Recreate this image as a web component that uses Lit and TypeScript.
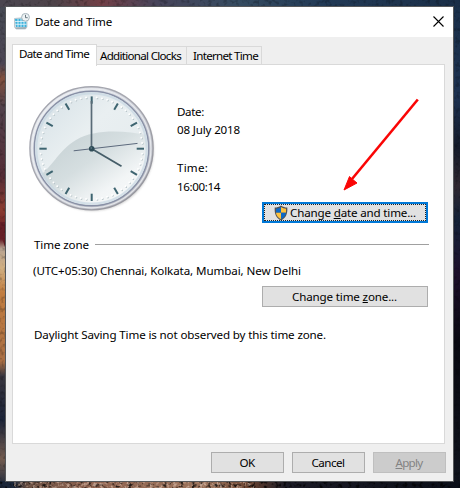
import { LitElement, html, css, svg } from "lit";
import { customElement, property } from "lit/decorators.js";

/** A label that tracks its letters so that the text fills a given width. */
@customElement("fit-label")
class FitLabel extends LitElement {
  @property({ type: Number }) width = 0;
  static styles = css`
    :host { display: inline-block; white-space: pre; }
    span { display: inline-block; }
  `;
  render() {
    return html`<span><slot></slot></span>`;
  }
  firstUpdated() {
    const span = this.renderRoot.querySelector("span")!;
    const n = (this.textContent ?? "").length;
    const natural = span.getBoundingClientRect().width;
    if (this.width && n) this.style.letterSpacing = `${(this.width - natural) / n}px`;
  }
}

@customElement("analog-clock")
class AnalogClock extends LitElement {
  static styles = css`
    :host { display: block; width: 130px; height: 130px; }
    svg { display: block; }
  `;
  render() {
    const c = 64.7;
    const at = (r: number, deg: number) => {
      const a = (deg * Math.PI) / 180;
      return [c + r * Math.sin(a), c - r * Math.cos(a)];
    };
    const marks = Array.from({ length: 60 }, (_, i) => {
      if (i % 5 === 0) {
        const [x1, y1] = at(45, i * 6);
        const [x2, y2] = at(52.3, i * 6);
        return svg`<line x1=${x1} y1=${y1} x2=${x2} y2=${y2} stroke="#3d6470" stroke-width="2"/>`;
      }
      const [x, y] = at(51, i * 6);
      return svg`<circle cx=${x + 0.4} cy=${y + 0.4} r="0.9" fill="#b3c1c6"/><circle cx=${x - 0.3} cy=${y - 0.4} r="1" fill="#fff"/>`;
    });
    return html`<svg width="130" height="130" viewBox="0 0 130 130">
      <defs>
        <linearGradient id="rim" x1="0" y1="0" x2="1" y2="1">
          <stop offset="0" stop-color="#a2a4ae"/><stop offset=".45" stop-color="#a7a8b0"/><stop offset="1" stop-color="#909098"/>
        </linearGradient>
        <linearGradient id="bevel" x1="0" y1="0" x2="1" y2="1">
          <stop offset="0" stop-color="#eef1f5"/><stop offset=".5" stop-color="#cfd2da"/><stop offset="1" stop-color="#b4b6be"/>
        </linearGradient>
        <linearGradient id="face" x1="0" y1="0" x2="1" y2="1">
          <stop offset="0" stop-color="#d3dfe5"/><stop offset=".4" stop-color="#e9eff1"/><stop offset="1" stop-color="#e3eaed"/>
        </linearGradient>
        <linearGradient id="sheen" x1="0" y1="0.3" x2="0.75" y2="1">
          <stop offset="0" stop-color="#c7d2d5"/><stop offset=".4" stop-color="#d5dee0"/><stop offset=".75" stop-color="#f2f5f6"/><stop offset="1" stop-color="#f8fafa"/>
        </linearGradient>
        <filter id="soft" x="-10%" y="-10%" width="120%" height="120%"><feGaussianBlur stdDeviation="1.2"/></filter>
        <clipPath id="dial"><circle cx="64.5" cy="64.5" r="56"/></clipPath>
      </defs>
      <circle cx="65.7" cy="66" r="61" fill="#777" opacity=".35" filter="url(#soft)"/>
      <circle cx="64.5" cy="64.3" r="61.6" fill="url(#bevel)" stroke="url(#rim)" stroke-width="1.4"/>
      <circle cx="64.5" cy="64.4" r="59.4" fill="none" stroke="#f2f3f6" stroke-width="1.2" opacity=".75"/>
      <circle cx="64.5" cy="64.5" r="57.2" fill="url(#face)" stroke="#8890a6" stroke-width="1.4"/>
      <path clip-path="url(#dial)" fill="url(#sheen)" d="M6 96C26 85 29 68 49 56C68 45 97 46 124 52V124H6Z"/>
      <circle cx="64.5" cy="64.5" r="55.2" fill="none" stroke="#c7d7e2" stroke-width="2.2" opacity=".7"/>
      ${marks}
      <line x1="46.7" y1="66.8" x2="110.5" y2="59.4" stroke="#5d6a7d" stroke-width="1"/>
      <line x1=${c} y1=${c} x2="94.5" y2="82.3" stroke="#455d68" stroke-width="1.8"/>
      <line x1="64.5" y1=${c} x2="64.5" y2="17" stroke="#596b77" stroke-width="1.7"/>
      <circle cx=${c} cy=${c} r="2.8" fill="#2f4c57"/>
      <circle cx="64.2" cy="64" r=".7" fill="#73919b"/>
    </svg>`;
  }
}

@customElement("app-root")
class AppRoot extends LitElement {
  static styles = css`
    :host {
      display: block; position: relative; width: 460px; height: 488px; overflow: hidden;
      font: 11.6px/16px "Noto Sans", "Open Sans", sans-serif; color: #000;
    }
    * { box-sizing: border-box; }
    svg { display: block; }
    u { text-underline-offset: 1px; text-decoration-thickness: 1px; }
    .wallpaper {
      position: absolute; inset: 0;
      background:
        linear-gradient(90deg, #4b4650, #4e4349 12%, #713f46 22%, #47445a 34%, #354b60 52%, #223a56 70%, #1a2e47) 0 0 / 460px 7px no-repeat,
        linear-gradient(90deg, #1b2639 3%, #6b5043 6%, #8f6350 20%, #9c745c 45%, #6b4431 54%, #1b1a25 62%, #0b0f19) 0 481px / 460px 7px no-repeat,
        linear-gradient(#464a54, #4b4553 13%, #80503e 16%, #51414b 22%, #542c36 36%, #8a3b30 43%, #651e26 47.5%, #651e26 49%, #b8a391 51%, #d0ae80 55%, #c17d40 60%, #a96e43 74%, #38353e 77%, #1b2338 86%, #735c50 94%, #1b273b) 0 0 / 6px 488px no-repeat,
        linear-gradient(#1a3049, #1d3150 20%, #141a29 30%, #2f2830 38%, #142238 45%, #1d0f2a 56%, #090911 70%, #10141d) 452px 0 / 8px 488px no-repeat;
    }
    .stage { position: relative; padding: 6px 6px 6px 5px; height: 488px; }
    .window {
      width: 449px; height: 476px; border: 1px solid #56585a; background: #efefef;
      display: flex; flex-direction: column;
    }
    .titlebar { height: 30px; flex: none; background: #fff; display: flex; align-items: center; padding: 0 9px 1px 8px; }
    .titlebar fit-label { margin: 1px 0 0 5px; }
    .close { margin-left: auto; }
    .tabs { display: flex; align-items: flex-end; height: 28px; flex: none; padding-left: 6px; }
    .tab { height: 19px; border: 1px solid #d9d9d9; border-left: 0; border-bottom: 0; padding: 1px 0 0 5px; }
    .tab.active { height: 22px; width: 85px; border-left: 1px solid #d9d9d9; background: #fff; padding: 1px 0 0 6px; margin-bottom: -1px; position: relative; }
    .tab.clocks { width: 90px; padding-left: 3px; }
    .tab.internet { width: 75px; padding-left: 6px; }
    .page { width: 433px; height: 380px; flex: none; margin: -1px 0 0 6px; border: 1px solid #d9d9d9; background: #fff; padding: 19px 16px 0 14px; }
    .now { display: flex; height: 137px; }
    .facts { display: flex; flex-direction: column; padding: 20px 0 0 20px; }
    .facts fit-label { height: 18px; line-height: 16px; }
    .facts fit-label:nth-child(2) { margin-bottom: 20px; }
    .facts fit-label:nth-child(4) { margin-top: 1px; }
    .button {
      display: flex; align-items: center; justify-content: center; height: 21px; width: 166px; margin-left: auto;
      border: 1px solid #adadad; background: #e1e1e1; line-height: 16px; padding-right: 1px;
    }
    .change { border: 2px solid #0078d7; padding: 0; margin-top: -19px; position: relative; }
    .change::after { content: ""; position: absolute; inset: 0; border: 1px dotted #222; }
    .change svg { margin: 0 2px 0 0; }
    .group { display: flex; align-items: center; height: 16px; margin-top: 14px; padding-left: 7px; }
    .rule { flex: 1; height: 1px; background: #a0a0a0; margin: 0 -1px 1px 6px; }
    .zone { display: flex; margin: 10px 0 0 6px; height: 16px; }
    .page .button.tz { margin-top: 7px; }
    .dst { display: flex; margin: 20px 0 0 7px; }
    .actions { display: flex; gap: 8px; justify-content: flex-end; padding: 8px 7px 0 0; }
    .actions .button { width: 73px; margin: 0; }
    .button.off { background: #ccc; border-color: #bfbfbf; color: #838383; }
    .arrow { position: absolute; left: 335px; top: 90px; }
  `;

  private wallpaper() {
    return html`<svg class="wallpaper" width="460" height="488" viewBox="0 0 460 488">
      <defs>
        <filter id="grain" x="0" y="0" width="100%" height="100%">
          <feTurbulence type="fractalNoise" baseFrequency=".25" numOctaves="3" seed="4"/>
          <feColorMatrix values="0 0 0 0 0  0 0 0 0 0  0 0 0 0 0  0 0 0 4 -2"/>
        </filter>
        <filter id="glint" x="0" y="0" width="100%" height="100%">
          <feTurbulence type="fractalNoise" baseFrequency=".3" numOctaves="3" seed="9"/>
          <feColorMatrix values="0 0 0 0 .7  0 0 0 0 .5  0 0 0 0 .4  0 0 0 4 -2"/>
        </filter>
      </defs>
      <path d="M0 232L6 250V222H0Z" fill="#651e26"/>
      <rect width="460" height="480" filter="url(#grain)" opacity=".2"/>
      <rect y="480" width="460" height="8" filter="url(#grain)" opacity=".75"/>
      <rect x="14" y="480" width="240" height="8" filter="url(#glint)" opacity=".7"/>
    </svg>`;
  }

  render() {
    return html`
      ${this.wallpaper()}
      <div class="stage">
        <div class="window">
          <div class="titlebar">
            <svg width="16" height="17" viewBox="0 0 16 17">
              <path d="M.5 5.5L11 4.5L13 6V14L11.5 16H2L.5 14Z" fill="#d7e0e4" stroke="#a9b9c1" stroke-width=".7"/>
              <path d="M1 6L12 5.5L12.5 14H2Z" fill="#3db2dc"/>
              <path d="M1 8.5H12.5M1.3 11.3H12.5M4 6V14M7 6V14M10 6V14" stroke="#ebf8fc" stroke-width=".8"/>
              <path d="M1 14.5L12.5 14L11.5 16H2.5Z" fill="#9eafb7"/>
              <circle cx="11.5" cy="4.3" r="3.9" fill="#eef3f5" stroke="#a7b5bc"/>
              <path d="M11.5 1.8V4.7H13.7" fill="none" stroke="#5b6b74" stroke-width=".9"/>
            </svg>
            <fit-label width="77">Date and Time</fit-label>
            <svg class="close" width="11" height="11" viewBox="0 0 11 11"><path d="M.5.5L10.5 10.5M10.5.5L.5 10.5" stroke="#000" stroke-width="1.1"/></svg>
          </div>
          <div class="tabs">
            <div class="tab active"><fit-label width="70">Date and Time</fit-label></div>
            <div class="tab clocks"><fit-label width="81">Additional Clocks</fit-label></div>
            <div class="tab internet"><fit-label width="65">Internet Time</fit-label></div>
          </div>
          <div class="page">
            <div class="now">
              <analog-clock></analog-clock>
              <div class="facts">
                <fit-label width="27">Date:</fit-label>
                <fit-label width="63">08 July 2018</fit-label>
                <fit-label width="31">Time:</fit-label>
                <fit-label width="43">16:00:14</fit-label>
              </div>
            </div>
            <div class="button change">
              <svg width="14" height="16" viewBox="0 0 14 16">
                <path d="M7 .5C5 2 3 2.5.7 2.5C.3 9 2 13 7 15.5C12 13 13.7 9 13.3 2.5C11 2.5 9 2 7 .5Z" fill="#535353"/>
                <path d="M7 2C5.3 3.2 3.8 3.6 2 3.7V7.7H7Z" fill="#0b68c7"/>
                <path d="M7 2C8.7 3.2 10.2 3.6 12 3.7V7.7H7Z" fill="#ffc23d"/>
                <path d="M2 7.7H7V14.2C4 12.6 2.3 10.6 2 7.7Z" fill="#ffc23d"/>
                <path d="M12 7.7H7V14.2C10 12.6 11.7 10.6 12 7.7Z" fill="#0b68c7"/>
              </svg>
              <fit-label width="126">Change <u>d</u>ate and time...</fit-label>
            </div>
            <div class="group"><fit-label width="55">Time zone</fit-label><div class="rule"></div></div>
            <div class="zone"><fit-label width="268">(UTC+05:30) Chennai, Kolkata, Mumbai, New Delhi</fit-label></div>
            <div class="button tz"><fit-label width="105">Change time <u>z</u>one...</fit-label></div>
            <div class="dst"><fit-label width="292">Daylight Saving Time is not observed by this time zone.</fit-label></div>
          </div>
          <div class="actions">
            <div class="button"><fit-label width="15">OK</fit-label></div>
            <div class="button"><fit-label width="33">Cancel</fit-label></div>
            <div class="button off"><fit-label width="27"><u>A</u>pply</fit-label></div>
          </div>
        </div>
      </div>
      <svg class="arrow" width="90" height="105" viewBox="0 0 90 105">
        <path d="M82.8 9.5L17 89" stroke="#fa0505" stroke-width="2.6"/>
        <path d="M9 100L14.5 86.5L17.2 89L22 93Z" fill="#fa0505" stroke="#fa0505"/>
      </svg>
    `;
  }
}
